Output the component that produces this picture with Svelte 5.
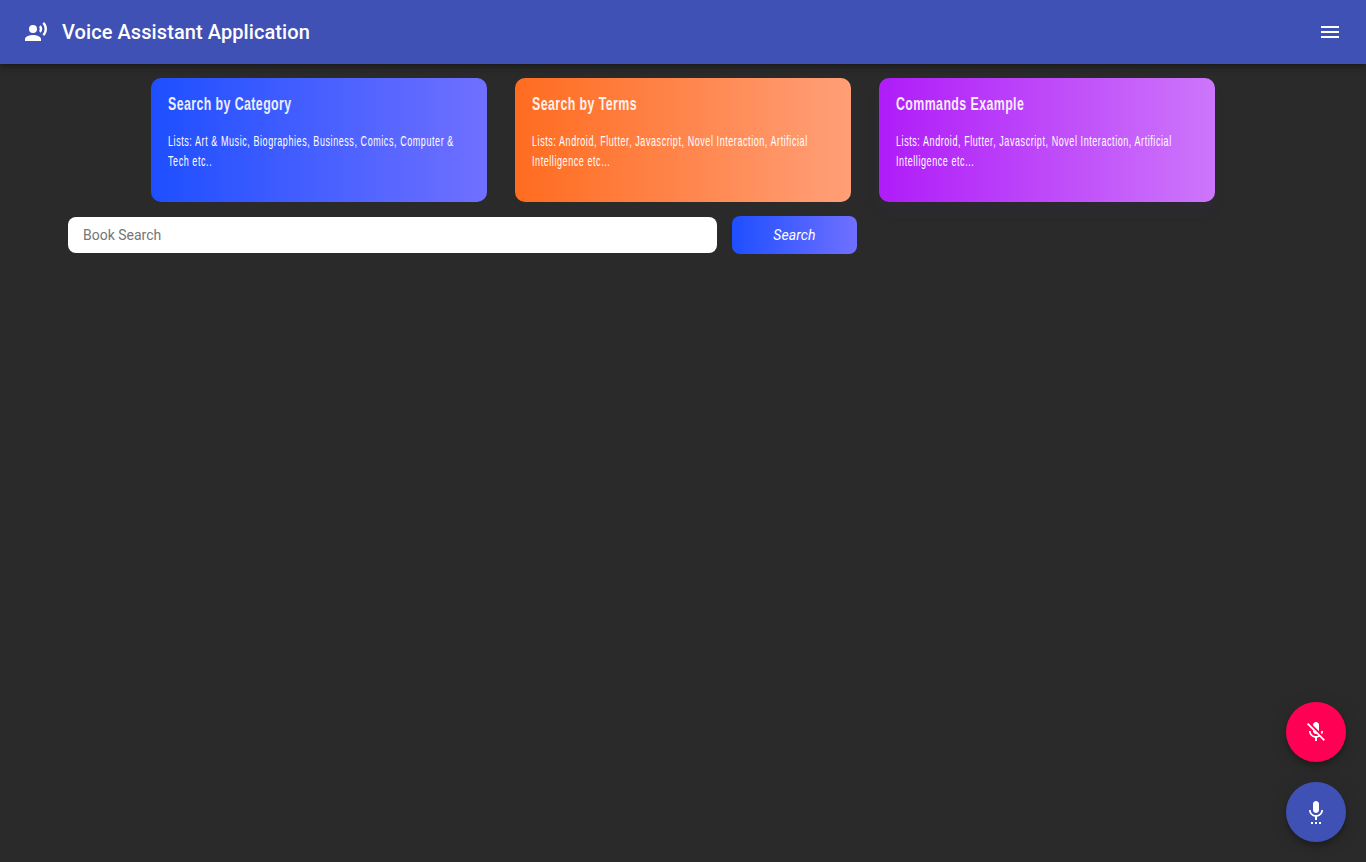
<script>
  const cards = [
    { title: "Search by Category", text: "Lists: Art & Music, Biographies, Business, Comics, Computer & Tech etc..", tone: "blue" },
    { title: "Search by Terms", text: "Lists: Android, Flutter, Javascript, Novel Interaction, Artificial Intelligence etc...", tone: "orange" },
    { title: "Commands Example", text: "Lists: Android, Flutter, Javascript, Novel Interaction, Artificial Intelligence etc...", tone: "purple" }
  ];
</script>

<header class="toolbar">
  <svg class="logo" viewBox="0 0 24 24" width="24" height="24" fill="#fff">
    <circle cx="9" cy="9" r="4" />
    <path d="M9 15c-2.67 0-8 1.34-8 4v2h16v-2c0-2.66-5.33-4-8-4zm7.76-9.64l-1.68 1.69c.84 1.18.84 2.71 0 3.89l1.68 1.69c2.02-2.02 2.02-5.07 0-7.27zM20.07 2l-1.63 1.63c2.77 3.02 2.77 7.56 0 10.74L20.07 16c3.9-3.89 3.91-9.95 0-14z" />
  </svg>
  <span class="title">Voice Assistant Application</span>
  <button class="menu" aria-label="Menu">
    <svg viewBox="0 0 24 24" width="24" height="24" fill="#fff">
      <path d="M3 18h18v-2H3v2zm0-5h18v-2H3v2zm0-7v2h18V6H3z" />
    </svg>
  </button>
</header>

<main>
  <section class="cards">
    {#each cards as card}
      <article class="card {card.tone}">
        <h3>{card.title}</h3>
        <p>{card.text}</p>
      </article>
    {/each}
  </section>

  <form class="search" on:submit|preventDefault>
    <input type="text" placeholder="Book Search" />
    <button type="submit">Search</button>
  </form>
</main>

<div class="fabs">
  <button class="fab pink" aria-label="Stop listening">
    <svg viewBox="0 0 24 24" width="24" height="24" fill="#fff">
      <path d="M19 11h-1.7c0 .74-.16 1.43-.43 2.05l1.23 1.23c.56-.98.9-2.09.9-3.28zm-4.02.17c0-.06.02-.11.02-.17V5c0-1.66-1.34-3-3-3S9 3.34 9 5v.18l5.98 5.99zM4.27 3L3 4.27l6.01 6.01V11c0 1.66 1.33 3 2.99 3 .22 0 .44-.03.65-.08l1.66 1.66c-.71.33-1.5.52-2.31.52-2.76 0-5.3-2.1-5.3-5.1H5c0 3.41 2.72 6.23 6 6.72V21h2v-3.28c.91-.13 1.77-.45 2.54-.9L19.73 21 21 19.73 4.27 3z" />
    </svg>
  </button>
  <button class="fab indigo" aria-label="Start listening">
    <svg viewBox="0 0 24 24" width="24" height="24" fill="#fff">
      <path d="M7 24h2v-2H7v2zm5-11c1.66 0 2.99-1.34 2.99-3L15 4c0-1.66-1.34-3-3-3S9 2.34 9 4v6c0 1.66 1.34 3 3 3zm-1 11h2v-2h-2v2zm4 0h2v-2h-2v2zm4-14h-1.7c0 3-2.54 5.1-5.3 5.1S6.7 13 6.7 10H5c0 3.41 2.72 6.23 6 6.72V20h2v-3.28c3.28-.49 6-3.31 6-6.72z" />
    </svg>
  </button>
</div>

<style>
  :global(body) {
    background: #2a2a2a;
    font-family: Roboto, "Liberation Sans", sans-serif;
    min-height: 862px;
  }

  .toolbar {
    display: flex;
    align-items: center;
    height: 64px;
    padding: 0 24px;
    box-sizing: border-box;
    background: #3f51b5;
    color: #fff;
    box-shadow: 0 2px 4px -1px rgba(0, 0, 0, 0.2), 0 4px 5px rgba(0, 0, 0, 0.14), 0 1px 10px rgba(0, 0, 0, 0.12);
  }
  .title {
    margin-left: 14px;
    font-size: 20px;
    font-weight: 500;
    letter-spacing: 0.08px;
  }
  .menu {
    display: flex;
    margin-left: auto;
    padding: 0;
    border: none;
    background: none;
  }

  .cards {
    display: flex;
    justify-content: center;
    gap: 28px;
    padding-top: 14px;
  }
  .card {
    box-sizing: border-box;
    width: 336px;
    height: 124px;
    padding: 14px 17px;
    border-radius: 10px;
    color: #fff;
    font-family: "Liberation Sans", sans-serif;
  }
  .blue { background: linear-gradient(to right, #1e4fff, #7070ff); }
  .orange { background: linear-gradient(to right, #ff6c20, #ff9f78); }
  .purple { background: linear-gradient(to right, #af1cf8, #cd76fb); box-shadow: 0 10px 14px rgba(80, 40, 150, 0.06); }
  /* the original display face is condensed, so squeeze the text sideways */
  .card h3 {
    width: 440px;
    margin: 0;
    font-size: 19px;
    line-height: 24px;
    font-weight: 700;
    letter-spacing: 0.65px;
    opacity: 0.9;
    transform: scaleX(0.65);
    transform-origin: 0 0;
  }
  .card p {
    width: 503px;
    margin: 15px 0 0;
    font-size: 15px;
    line-height: 20px;
    letter-spacing: 0.95px;
    transform: scaleX(0.6);
    transform-origin: 0 0;
  }

  .search {
    display: flex;
    align-items: center;
    gap: 15px;
    margin-top: 14px;
    padding-left: 68px;
  }
  .search input {
    box-sizing: border-box;
    width: 649px;
    height: 36px;
    padding: 0 15px;
    border: none;
    border-radius: 8px;
    background: #fff;
    font: 400 14px Roboto, sans-serif;
    outline: none;
  }
  .search input::placeholder {
    color: #757575;
  }
  .search button {
    width: 125px;
    height: 38px;
    border: none;
    border-radius: 8px;
    background: linear-gradient(to right, #1e4fff, #7070ff);
    color: #fff;
    font: italic 400 14px Roboto, sans-serif;
    letter-spacing: 0.1px;
  }

  .fabs {
    position: fixed;
    right: 20px;
    bottom: 20px;
    display: flex;
    flex-direction: column;
    gap: 20px;
  }
  .fab {
    display: flex;
    align-items: center;
    justify-content: center;
    width: 60px;
    height: 60px;
    padding: 0;
    border: none;
    border-radius: 50%;
    box-shadow: 0 3px 5px -1px rgba(0, 0, 0, 0.2), 0 6px 10px rgba(0, 0, 0, 0.14), 0 1px 18px rgba(0, 0, 0, 0.12);
  }
  .pink { background: #ff0055; }
  .indigo { background: #3f51b5; }
</style>
